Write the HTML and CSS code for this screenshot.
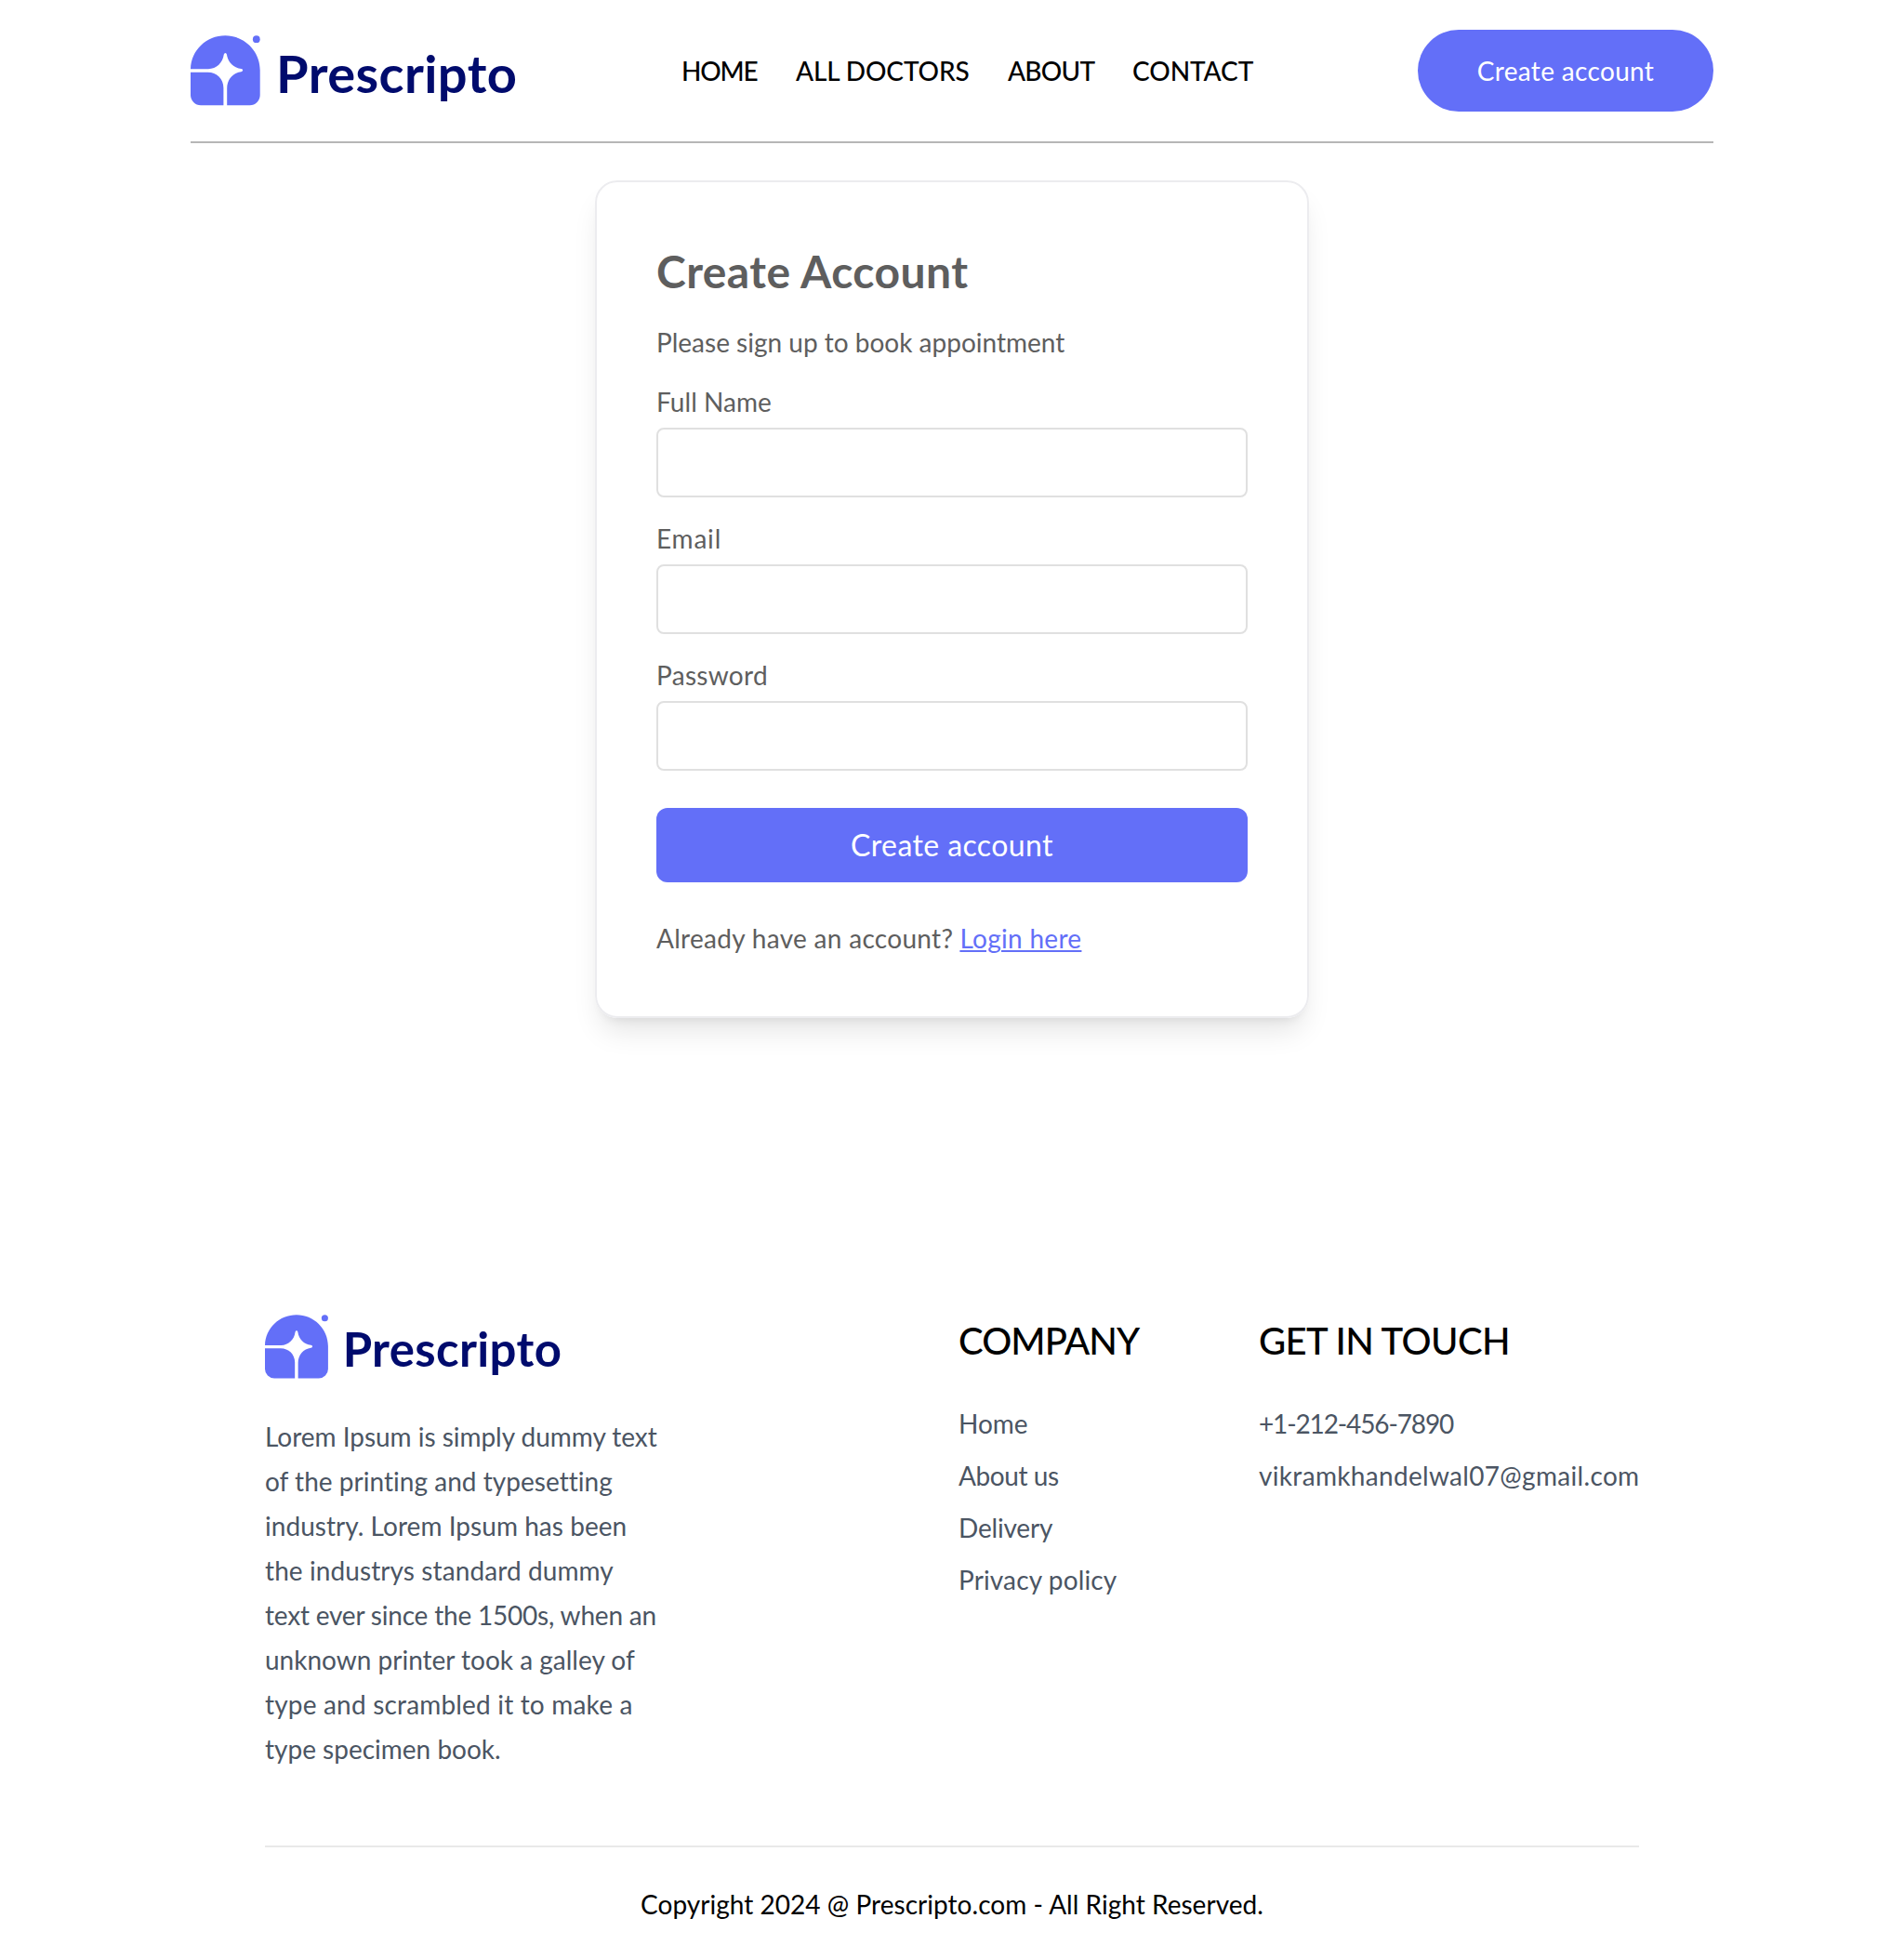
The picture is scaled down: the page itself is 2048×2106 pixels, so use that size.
FILE: index.html
```html
<!DOCTYPE html>
<html lang="en">
<head>
<meta charset="utf-8">
<title>Prescripto</title>
<link rel="stylesheet" href="styles.css">
</head>
<body>
<div class="page">
  <header class="header">
    <svg class="logo" viewBox="0 0 352 77">
      <path class="logo-mark" d="M0 36.2C.6 16 17 .3 37.300.300S74.700 16.500 74.700 37.500V64.300a11 11 0 0 1-11 11H39.200V57C39.200 47.500 45.500 40.500 54.400 39.200Q56.200 38.800 56.200 37.600T54.400 36.100C46 35 40.100 29 38.900 20.600Q38.600 19 37.400 19T35.800 20.600C34.600 29.500 28 36.200 19 36.200ZM0 39.800H18.500C28.200 39.800 35.400 47 35.400 56.500V75.300H11a11 11 0 0 1-11-11Z"/>
      <circle class="logo-mark" cx="70.800" cy="4.200" r="3.900"/>
      <text class="logo-text" x="92" y="61.5">Prescripto</text>
    </svg>
    <nav class="nav">
      <a class="ls-home">HOME</a>
      <a class="ls-doctors">ALL DOCTORS</a>
      <a class="ls-about">ABOUT</a>
      <a class="ls-contact">CONTACT</a>
    </nav>
    <button class="pill">Create account</button>
  </header>

  <form class="card">
    <h1 class="title">Create Account</h1>
    <p class="lead">Please sign up to book appointment</p>
    <label class="field"><span class="ls-name">Full Name</span><input class="input" type="text"></label>
    <label class="field"><span class="ls-email">Email</span><input class="input" type="email"></label>
    <label class="field"><span class="ls-password">Password</span><input class="input" type="password"></label>
    <button class="submit" type="button">Create account</button>
    <p class="switch"><span class="ls-already">Already have an account?</span> <a class="login">Login here</a></p>
  </form>

  <footer class="footer">
    <div class="columns">
      <div>
        <svg class="logo logo-small" viewBox="0 0 352 77">
          <path class="logo-mark" d="M0 36.2C.6 16 17 .3 37.300.300S74.700 16.500 74.700 37.500V64.300a11 11 0 0 1-11 11H39.200V57C39.200 47.500 45.500 40.500 54.400 39.200Q56.200 38.800 56.200 37.600T54.400 36.100C46 35 40.100 29 38.900 20.600Q38.600 19 37.400 19T35.800 20.600C34.600 29.500 28 36.200 19 36.200ZM0 39.800H18.500C28.200 39.800 35.400 47 35.400 56.500V75.300H11a11 11 0 0 1-11-11Z"/>
          <circle class="logo-mark" cx="70.800" cy="4.200" r="3.900"/>
          <text class="logo-text" x="92" y="61.5">Prescripto</text>
        </svg>
        <p class="about">
          <span class="l1">Lorem Ipsum is simply dummy text</span>
          <span class="l2">of the printing and typesetting</span>
          <span class="l3">industry. Lorem Ipsum has been</span>
          <span class="l4">the industrys standard dummy</span>
          <span class="l5">text ever since the 1500s, when an</span>
          <span class="l6">unknown printer took a galley of</span>
          <span class="l7">type and scrambled it to make a</span>
          <span class="l8">type specimen book.</span>
        </p>
      </div>
      <div>
        <h2 class="heading ls-company">COMPANY</h2>
        <ul class="list">
          <li class="ls-fhome">Home</li>
          <li class="ls-us">About us</li>
          <li class="ls-delivery">Delivery</li>
          <li class="ls-privacy">Privacy policy</li>
        </ul>
      </div>
      <div>
        <h2 class="heading ls-touch">GET IN TOUCH</h2>
        <ul class="list">
          <li class="ls-phone">+1-212-456-7890</li>
          <li class="ls-mail">vikramkhandelwal07@gmail.com</li>
        </ul>
      </div>
    </div>
    <p class="copyright">Copyright 2024 @ Prescripto.com - All Right Reserved.</p>
  </footer>
</div>
</body>
</html>
```
FILE: styles.css
```css
* { box-sizing: border-box; margin: 0; padding: 0; }
body { background: #fff; color: #000; font: 400 28px/40px Lato, sans-serif; }
button { border: 0; font-family: inherit; color: #fff; background: #636ff8; }
.page { padding: 0 205px; }

.header { display: flex; justify-content: space-between; align-items: flex-start; height: 154px; padding-top: 32px; border-bottom: 2px solid #b6b6b6; }
.logo { display: block; width: 352px; height: 77px; margin-top: 6px; }
.logo-mark { fill: #636ff8; }
.logo-text { font: 700 56px Lato, sans-serif; letter-spacing: 0.42px; fill: #000b6d; }
.nav { display: grid; grid-template-columns: 83px 188px 94px 131px; gap: 40px; padding-top: 24px; font-weight: 500; white-space: nowrap; }
.ls-home { letter-spacing: -1.17px; }
.ls-doctors { letter-spacing: -0.1px; }
.ls-about { letter-spacing: -0.75px; }
.ls-contact { letter-spacing: -0.05px; }
.pill { width: 318px; height: 88px; border-radius: 44px; font-size: 28px; font-weight: 400; line-height: 40px; letter-spacing: 0.33px; }

.card { width: 768px; height: 901px; margin: 40px auto 0; padding: 64px; border: 2px solid #ececef; border-radius: 24px; color: #5e5e5e; box-shadow: 0 20px 30px -6px rgba(0,0,0,.1), 0 8px 12px -8px rgba(0,0,0,.1); }
.title { font-size: 48px; font-weight: 700; line-height: 64px; letter-spacing: 0.45px; }
.lead { margin-top: 24px; }
.field { display: block; margin-top: 24px; }
.field span { display: block; }
.input { display: block; width: 100%; height: 75px; margin: 8px 0 0; border: 2px solid #e0e0e0; border-radius: 8px; font: inherit; padding: 0 16px; outline: 0; }
.ls-name { letter-spacing: 0.05px; }
.ls-email { letter-spacing: 0.8px; }
.ls-password { letter-spacing: 0.3px; }
.submit { display: block; width: 100%; height: 80px; margin-top: 40px; border-radius: 12px; font-size: 32px; line-height: 44px; letter-spacing: 0.4px; }
.switch { margin-top: 40px; }
.ls-already { letter-spacing: 0.3px; }
.login { color: #636ff8; letter-spacing: 0.3px; text-decoration: underline; text-decoration-thickness: 2px; text-underline-offset: 2px; }

.footer { margin-top: 319px; padding: 0 80px; }
.columns { display: grid; grid-template-columns: 746px 323px 409px; height: 571px; color: #4b5563; }
.logo-small { width: 320px; height: 70px; margin: 0 0 37px; }
.about { line-height: 48px; white-space: nowrap; }
.about span { display: block; }
.l1 { letter-spacing: -0.03px; }
.l2 { letter-spacing: 0.03px; }
.l3 { letter-spacing: 0.04px; }
.l4 { letter-spacing: 0.09px; }
.l5 { letter-spacing: -0.2px; }
.l6 { letter-spacing: 0; }
.l7 { letter-spacing: 0.18px; }
.l8 { letter-spacing: 0; }
.heading { margin-bottom: 41px; color: #000; font-size: 40px; font-weight: 500; line-height: 56px; }
.ls-company { letter-spacing: -0.95px; }
.ls-touch { letter-spacing: -0.6px; }
.list { display: grid; gap: 16px; list-style: none; white-space: nowrap; }
.ls-fhome { letter-spacing: 0; }
.ls-us { letter-spacing: -0.4px; }
.ls-delivery { letter-spacing: -0.18px; }
.ls-privacy { letter-spacing: 0.13px; }
.ls-phone { letter-spacing: -1.13px; }
.ls-mail { letter-spacing: 0.32px; }
.copyright { padding: 41px 0 38px; border-top: 2px solid #e9e9e9; text-align: center; letter-spacing: 0.03px; }
```
